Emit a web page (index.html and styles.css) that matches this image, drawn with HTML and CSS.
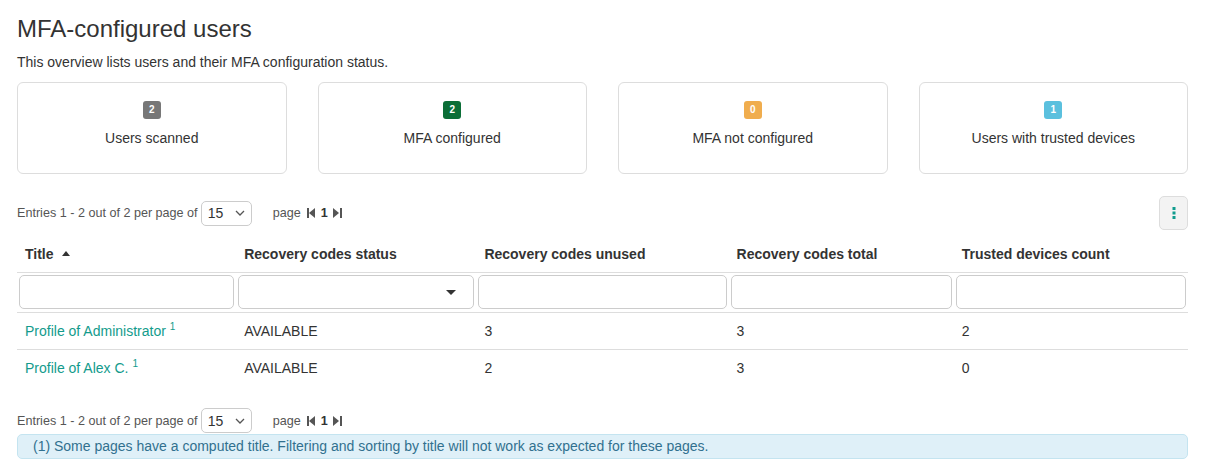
FILE: index.html
```html
<html lang="en"><head>
    <meta charset="UTF-8">
    <meta name="viewport" content="width=device-width, initial-scale=1.0">
    <title>MFA-configured users</title>
    <link rel="stylesheet" href="styles.css">
</head>
<body>
    <h1>MFA-configured users</h1>
    <p class="intro">This overview lists users and their MFA configuration status.</p>

    <div class="cards">
        <div class="card"><span class="badge badge-gray">2</span><span class="card-label">Users scanned</span></div>
        <div class="card"><span class="badge badge-green">2</span><span class="card-label">MFA configured</span></div>
        <div class="card"><span class="badge badge-orange">0</span><span class="card-label">MFA not configured</span></div>
        <div class="card"><span class="badge badge-cyan">1</span><span class="card-label">Users with trusted devices</span></div>
    </div>

    <div class="pager-row">
        <div class="pager">
            <span>Entries 1 - 2 out of 2 per page of</span>
            <span class="page-size">15 <svg width="10" height="6" viewBox="0 0 10 6"><path d="M1 1l4 4 4-4" fill="none" stroke="#555" stroke-width="1.3"/></svg></span>
            <span class="page-label">page</span>
            <svg class="nav" width="9" height="10" viewBox="0 0 9 10"><rect x="0" y="0" width="2" height="10" fill="#555"/><path d="M8 0v10L2 5z" fill="#555"/></svg>
            <b>1</b>
            <svg class="nav" width="9" height="10" viewBox="0 0 9 10"><path d="M0 0v10l6-5z" fill="#555"/><rect x="7" y="0" width="2" height="10" fill="#555"/></svg>
        </div>
        <button class="kebab"><svg width="4" height="12" viewBox="0 0 4 12"><rect x="0.5" y="0" width="3" height="3" fill="#109c8e"/><rect x="0.5" y="4.5" width="3" height="3" fill="#109c8e"/><rect x="0.5" y="9" width="3" height="3" fill="#109c8e"/></svg></button>
    </div>

    <table class="list">
        <colgroup>
            <col style="width:219px"><col style="width:240px"><col style="width:252px"><col style="width:225px"><col style="width:234px">
        </colgroup>
        <thead>
            <tr>
                <th>Title <span class="sort-up"></span></th>
                <th>Recovery codes status</th>
                <th>Recovery codes unused</th>
                <th>Recovery codes total</th>
                <th>Trusted devices count</th>
            </tr>
            <tr class="filters">
                <td><div class="filter"></div></td>
                <td><div class="filter filter-select"><span class="caret"></span></div></td>
                <td><div class="filter"></div></td>
                <td><div class="filter"></div></td>
                <td><div class="filter"></div></td>
            </tr>
        </thead>
        <tbody>
            <tr>
                <td><a href="#">Profile of Administrator</a> <sup>1</sup></td>
                <td>AVAILABLE</td>
                <td>3</td>
                <td>3</td>
                <td>2</td>
            </tr>
            <tr>
                <td><a href="#">Profile of Alex C.</a> <sup>1</sup></td>
                <td>AVAILABLE</td>
                <td>2</td>
                <td>3</td>
                <td>0</td>
            </tr>
        </tbody>
    </table>

    <div class="pager pager-bottom">
        <span>Entries 1 - 2 out of 2 per page of</span>
        <span class="page-size">15 <svg width="10" height="6" viewBox="0 0 10 6"><path d="M1 1l4 4 4-4" fill="none" stroke="#555" stroke-width="1.3"/></svg></span>
        <span class="page-label">page</span>
        <svg class="nav" width="9" height="10" viewBox="0 0 9 10"><rect x="0" y="0" width="2" height="10" fill="#555"/><path d="M8 0v10L2 5z" fill="#555"/></svg>
        <b>1</b>
        <svg class="nav" width="9" height="10" viewBox="0 0 9 10"><path d="M0 0v10l6-5z" fill="#555"/><rect x="7" y="0" width="2" height="10" fill="#555"/></svg>
    </div>
    <div class="note">(1) Some pages have a computed title. Filtering and sorting by title will not work as expected for these pages.</div>
</body></html>
```

FILE: styles.css
```css
body {
    margin: 0;
    padding: 12px 21px 0 17px;
    font-family: "Liberation Sans", Arial, sans-serif;
    font-size: 14px;
    color: #333;
    background-color: #fff;
}

h1 {
    margin: 0;
    font-size: 24px;
    font-weight: normal;
    line-height: 34px;
}

.intro {
    margin: 6px 0 0;
    line-height: 20px;
}

.cards {
    display: flex;
    gap: 31px;
    margin-top: 10px;
}

.card {
    flex: 1;
    border: 1px solid #ddd;
    border-radius: 6px;
    display: flex;
    flex-direction: column;
    align-items: center;
    padding-top: 18px;
    height: 72px;
}

.badge {
    display: inline-block;
    min-width: 18px;
    height: 18px;
    line-height: 18px;
    border-radius: 3px;
    color: #fff;
    font-size: 10px;
    font-weight: bold;
    text-align: center;
}

.badge-gray { background-color: #777; }
.badge-green { background-color: #0b6e37; }
.badge-orange { background-color: #f0ad4e; }
.badge-cyan { background-color: #5bc0de; }

.card-label {
    margin-top: 9px;
    line-height: 20px;
}

.pager-row {
    display: flex;
    justify-content: space-between;
    align-items: center;
    margin-top: 22px;
}

.pager {
    display: flex;
    align-items: center;
    font-size: 12.6px;
    color: #555;
}

.page-size {
    display: inline-flex;
    align-items: center;
    justify-content: space-between;
    box-sizing: border-box;
    width: 51px;
    height: 25px;
    margin-left: 3px;
    padding: 0 6px 0 6px;
    border: 1px solid #ccc;
    border-radius: 5px;
    font-size: 14px;
    color: #333;
}

.page-label {
    margin-left: 21px;
    margin-right: 6px;
}

.pager b {
    margin: 0 5px;
    color: #333;
}

.kebab {
    width: 29px;
    height: 34px;
    border: 1px solid #ddd;
    border-radius: 5px;
    background-color: #f3f3f3;
    display: flex;
    align-items: center;
    justify-content: center;
    padding: 0;
}

.list {
    border-collapse: collapse;
    table-layout: fixed;
    width: 1171px;
    margin-top: 6px;
    font-size: 14px;
}

.list th {
    text-align: left;
    font-weight: bold;
    padding: 8px;
    line-height: 20px;
    border-bottom: 1px solid #ddd;
}

.sort-up {
    display: inline-block;
    width: 0;
    height: 0;
    margin-left: 5px;
    vertical-align: 3px;
    border-left: 4px solid transparent;
    border-right: 4px solid transparent;
    border-bottom: 5px solid #333;
}

.list td {
    padding: 8px;
    line-height: 20px;
    border-top: 1px solid #ddd;
}

.list .filters td {
    padding: 2px 2px 3px;
    border-top: none;
}

.filter {
    box-sizing: border-box;
    height: 34px;
    border: 1px solid #ccc;
    border-radius: 5px;
    background-color: #fff;
}

.filter-select {
    display: flex;
    align-items: center;
    justify-content: flex-end;
    padding-right: 17px;
}

.caret {
    width: 0;
    height: 0;
    border-left: 5px solid transparent;
    border-right: 5px solid transparent;
    border-top: 5px solid #333;
}

.list a {
    color: #139b8c;
    text-decoration: none;
}

.list sup {
    color: #139b8c;
    font-size: 10px;
    line-height: 0;
    vertical-align: 6px;
}

.pager-bottom {
    margin-top: 22px;
}

.note {
    margin-top: 1px;
    padding: 3px 15px;
    line-height: 17px;
    border: 1px solid #c4e4f0;
    border-radius: 5px;
    background-color: #dff0f8;
    color: #31708f;
}
```
